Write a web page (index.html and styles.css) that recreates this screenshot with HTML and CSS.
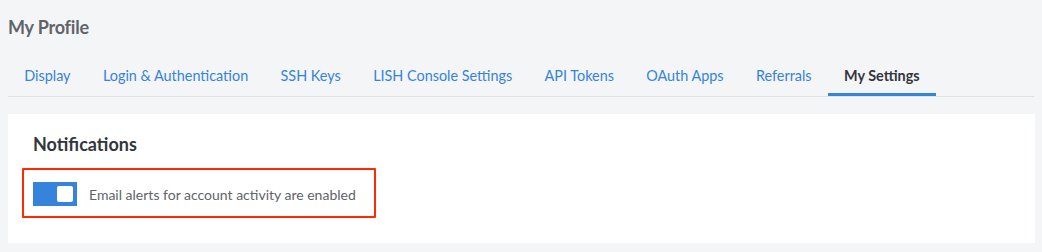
FILE: index.html
```html
<!DOCTYPE html>
<html>
<head lang="en">
    <meta charset="UTF-8">
    <title>My Profile</title>
    <link rel="stylesheet" href="styles.css">
</head>
<body>
<div id="page">
    <h1 class="title">My Profile</h1>
    <div class="tabs">
        <a class="tab">Display</a>
        <a class="tab">Login &amp; Authentication</a>
        <a class="tab">SSH Keys</a>
        <a class="tab">LISH Console Settings</a>
        <a class="tab">API Tokens</a>
        <a class="tab">OAuth Apps</a>
        <a class="tab">Referrals</a>
        <a class="tab selected">My Settings</a>
    </div>
    <div class="card">
        <h2 class="card-title">Notifications</h2>
        <div class="highlight">
            <label class="toggle-row">
                <span class="toggle"><span class="knob"></span></span>
                <span class="toggle-label">Email alerts for account activity are enabled</span>
            </label>
        </div>
    </div>
</div>
</body>
</html>
```

FILE: styles.css
```css
*{
    margin: 0;
    padding: 0;
    box-sizing: border-box;
}
body{
    background: #f4f5f6;
    font-family: Lato, "Liberation Sans", sans-serif;
    width: 1042px;
    height: 252px;
    overflow: hidden;
}
#page{
    padding: 0 8px 0 8px;
}
.title{
    font-size: 18px;
    font-weight: bold;
    color: #606469;
    line-height: 22px;
    padding-top: 16px;
    letter-spacing: -0.2px;
}
.tabs{
    display: flex;
    margin-top: 21px;
    border-bottom: 1px solid #e0e1e4;
    width: 1026px;
}
.tab{
    font-size: 14.4px;
    color: #3683dc;
    padding: 0 16.2px;
    height: 37px;
    line-height: 34px;
    border-bottom: 3px solid transparent;
    cursor: pointer;
}
.tab.selected{
    color: #32363c;
    font-weight: bold;
    border-bottom-color: #3683dc;
}
.card{
    background: #fff;
    margin-top: 17px;
    width: 1027px;
    height: 129px;
    padding: 19px 14px 0 14px;
}
.card-title{
    font-size: 18px;
    font-weight: bold;
    color: #32363c;
    line-height: 22px;
    padding-left: 11px;
}
.highlight{
    margin-top: 13px;
    width: 354px;
    height: 50px;
    border: 2px solid #ff2a00;
    border-radius: 1px;
    padding: 12px 0 0 9px;
}
.toggle-row{
    display: flex;
    align-items: center;
    gap: 12px;
}
.toggle{
    width: 44px;
    height: 24px;
    background: #3683dc;
    display: flex;
    align-items: center;
    justify-content: flex-end;
    padding-right: 4px;
}
.knob{
    width: 16px;
    height: 16px;
    background: #fff;
    border-radius: 2px;
}
.toggle-label{
    font-size: 14px;
    color: #606469;
}
```
